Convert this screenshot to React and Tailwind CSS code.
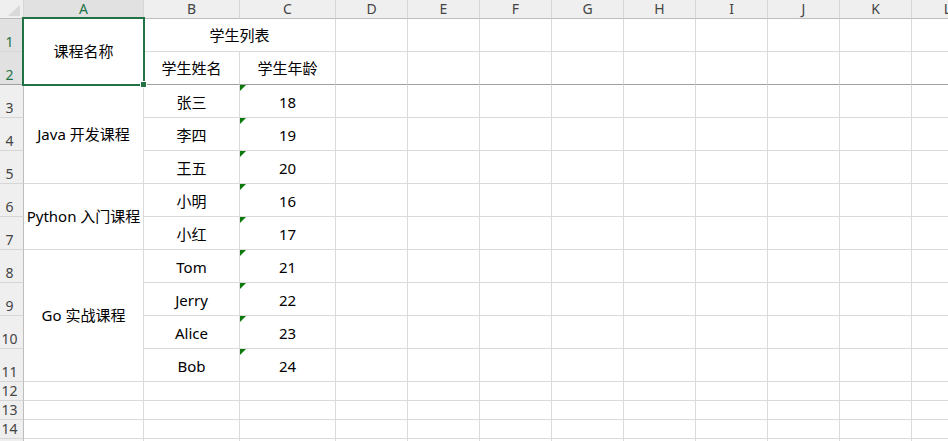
import React from 'react';

const columns = ['A', 'B', 'C', 'D', 'E', 'F', 'G', 'H', 'I', 'J', 'K', 'L'];
const emptyTail = ['D', 'E', 'F', 'G', 'H', 'I', 'J', 'K', 'L'];

const courses = {
  3: { name: 'Java 开发课程', span: 'row-span-3' },
  6: { name: 'Python 入门课程', span: 'row-span-2' },
  8: { name: 'Go 实战课程', span: 'row-span-4' },
};

const students = [
  { row: 3, name: '张三', age: '18' },
  { row: 4, name: '李四', age: '19' },
  { row: 5, name: '王五', age: '20' },
  { row: 6, name: '小明', age: '16' },
  { row: 7, name: '小红', age: '17' },
  { row: 8, name: 'Tom', age: '21' },
  { row: 9, name: 'Jerry', age: '22' },
  { row: 10, name: 'Alice', age: '23' },
  { row: 11, name: 'Bob', age: '24' },
];

function Cell({ className = '', children }) {
  return (
    <div className={`flex items-center justify-center border-r border-b border-[#dadada] bg-white text-[15px] text-black ${className}`}>
      {children}
    </div>
  );
}

function RowHeader({ n, selected, freeze }) {
  return (
    <div
      className={`flex items-end justify-center pr-1 pb-[2px] border-r border-b text-[14px] leading-none ${
        selected ? 'bg-[#e1e1e1] text-[#217346]' : 'bg-[#efefef] text-[#444]'
      } ${freeze ? 'border-b-[#a0a0a0]' : 'border-b-[#d6d6d6]'} border-r-[#bdbdbd]`}
    >
      {n}
    </div>
  );
}

function TextFlag() {
  return (
    <svg className="absolute left-0 top-0" width="6" height="6" viewBox="0 0 6 6">
      <polygon points="0,0 6,0 0,6" fill="#0b7a0b" />
    </svg>
  );
}

export default function App() {
  return (
    <div className="relative h-[441px] w-[948px] overflow-hidden bg-white font-['Noto_Sans','Noto_Sans_CJK_SC',sans-serif]">
      <div className="grid grid-cols-[24px_120px_96px_96px_72px_72px_72px_72px_72px_72px_72px_72px_72px] grid-rows-[19px_33px_33px_33px_33px_33px_33px_33px_33px_33px_33px_33px_19px_19px_19px_19px]">
        {/* corner */}
        <div className="relative border-r border-b border-r-[#d6d6d6] border-b-[#bdbdbd] bg-[#efefef]">
          <svg className="absolute left-[8px] top-[5px]" width="12" height="11" viewBox="0 0 12 11">
            <polygon points="12,0 12,11 0,11" fill="#d9d9d9" />
          </svg>
        </div>
        {columns.map((c) => (
          <div
            key={c}
            className={`flex items-center justify-center border-r border-b border-r-[#d6d6d6] border-b-[#bdbdbd] text-[14px] leading-none ${
              c === 'A' ? 'bg-[#e1e1e1] text-[#217346]' : 'bg-[#efefef] text-[#444]'
            }`}
          >
            {c}
          </div>
        ))}

        {/* row 1 */}
        <RowHeader n={1} selected />
        <Cell className="row-span-2 border-b-[#a0a0a0]">课程名称</Cell>
        <Cell className="col-span-2">学生列表</Cell>
        {emptyTail.map((c) => <Cell key={'1' + c} />)}

        {/* row 2 */}
        <RowHeader n={2} selected freeze />
        <Cell className="border-b-[#a0a0a0]">学生姓名</Cell>
        <Cell className="border-b-[#a0a0a0]">学生年龄</Cell>
        {emptyTail.map((c) => <Cell key={'2' + c} className="border-b-[#a0a0a0]" />)}

        {students.map((s) => (
          <React.Fragment key={s.row}>
            <RowHeader n={s.row} />
            {courses[s.row] && <Cell className={courses[s.row].span}>{courses[s.row].name}</Cell>}
            <Cell className="pt-[3px]">{s.name}</Cell>
            <Cell className="relative pt-[3px]">
              <TextFlag />
              {s.age}
            </Cell>
            {emptyTail.map((c) => <Cell key={s.row + c} />)}
          </React.Fragment>
        ))}

        {[12, 13, 14, 15].map((r) => (
          <React.Fragment key={r}>
            <RowHeader n={r} />
            {columns.map((c) => <Cell key={r + c} />)}
          </React.Fragment>
        ))}
      </div>

      {/* selection box over A1:A2 */}
      <div className="absolute left-[22px] top-[17px] h-[69px] w-[123px] border-2 border-[#217346]" />
      <div className="absolute left-[140px] top-[81px] h-[7px] w-[7px] border border-white bg-[#217346]" />
    </div>
  );
}
